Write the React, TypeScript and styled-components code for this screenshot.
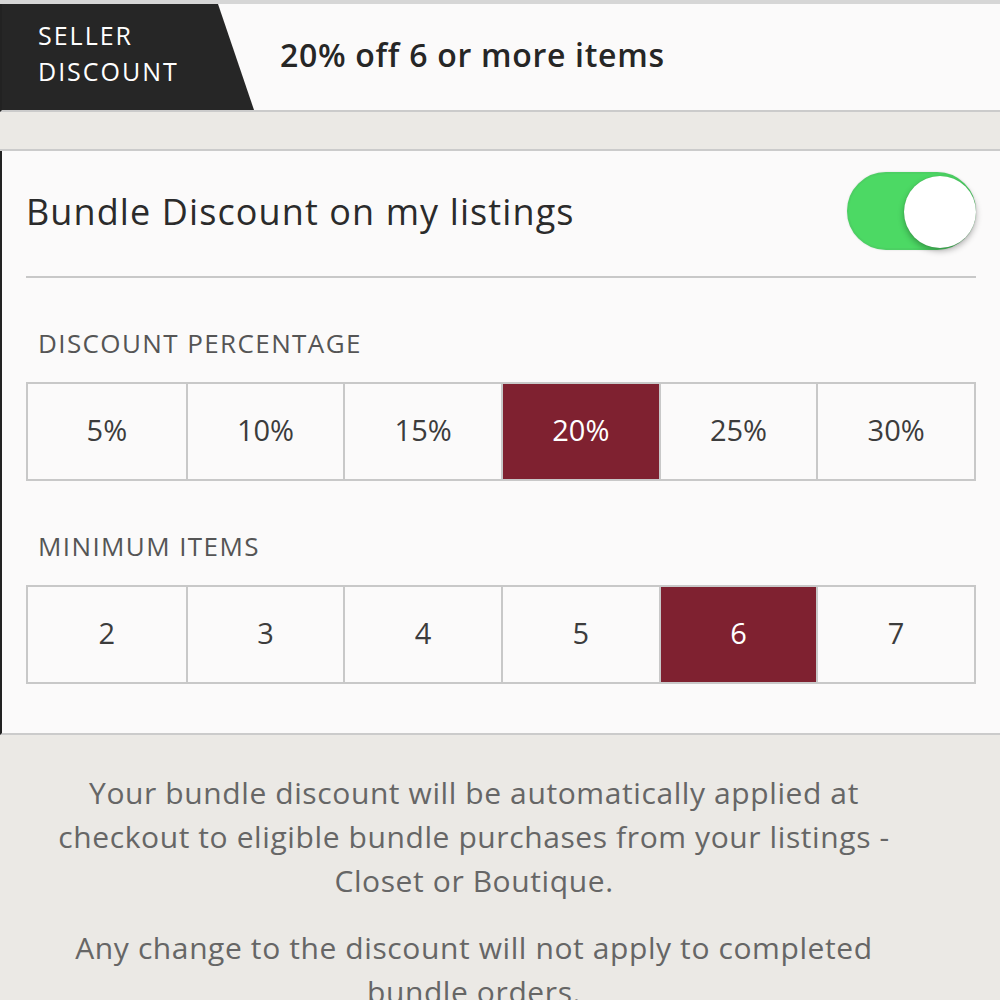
import React, { useState } from 'react'
import styled, { createGlobalStyle } from 'styled-components'

const GlobalStyle = createGlobalStyle`
    html, body {
        margin: 0;
        padding: 0;
        background: #ebe9e5;
        font-family: "Open Sans", Lato, sans-serif;
    }
`

const PERCENTAGES = [5, 10, 15, 20, 25, 30]
const MIN_ITEMS = [2, 3, 4, 5, 6, 7]

const Page = styled.div`
    width: 1000px;
    height: 1000px;
    overflow: hidden;
    background: #ebe9e5;
    border-top: 4px solid #d6d6d6;
    box-sizing: border-box;
`

const Header = styled.div`
    display: flex;
    align-items: center;
    height: 106px;
    background: #fbfafa;
    border-bottom: 2px solid #cbcbcb;
    border-left: 2px solid #222;
`

const Tab = styled.div`
    align-self: stretch;
    width: 252px;
    background: #262626;
    clip-path: polygon(0 0, 216px 0, 252px 100%, 0 100%);
    color: #fff;
    font-size: 25px;
    letter-spacing: 2px;
    line-height: 36px;
    padding: 13px 0 0 36px;
    box-sizing: border-box;
`

const HeaderText = styled.div`
    margin-left: 26px;
    font-size: 32px;
    font-weight: 600;
    letter-spacing: 0.7px;
    color: #262626;
    padding-bottom: 6px;
`

const Band = styled.div`
    height: 37px;
    border-bottom: 2px solid #cbcbcb;
`

const Card = styled.div`
    background: #fbfafa;
    border-left: 2px solid #222;
    border-bottom: 2px solid #cbcbcb;
    padding: 0 24px 0 24px;
    height: 584px;
    box-sizing: border-box;
`

const ToggleRow = styled.div`
    display: flex;
    align-items: center;
    justify-content: space-between;
    height: 125px;
    border-bottom: 2px solid #c8c8c8;
`

const ToggleLabel = styled.div`
    font-size: 36px;
    letter-spacing: 1.1px;
    color: #2b2b2b;
    padding-bottom: 4px;
`

const Switch = styled.button<{ $on: boolean }>`
    position: relative;
    width: 129px;
    height: 78px;
    border-radius: 39px;
    border: 2px solid ${p => (p.$on ? '#4cd063' : '#dcdcdc')};
    background: ${p => (p.$on ? '#4cd964' : '#fff')};
    box-shadow: 0 0 2px rgba(0, 0, 0, 0.15);
    padding: 0;
    margin-top: -6px;
    cursor: pointer;
`

const Knob = styled.span<{ $on: boolean }>`
    position: absolute;
    top: 2px;
    left: ${p => (p.$on ? '55px' : '2px')};
    width: 72px;
    height: 72px;
    border-radius: 50%;
    background: #fff;
    box-shadow: 0 3px 6px rgba(0, 0, 0, 0.3), 0 0 1px rgba(0, 0, 0, 0.2);
`

const SectionTitle = styled.div`
    font-size: 26px;
    letter-spacing: 1.4px;
    color: #555;
    padding: 52px 0 0 12px;
    line-height: 26px;
`

const Options = styled.div`
    display: grid;
    grid-template-columns: repeat(6, 1fr);
    margin-top: 26px;
    border: 2px solid #c8c8c8;
    height: 99px;
    box-sizing: border-box;
`

const Option = styled.button<{ $selected: boolean }>`
    border: none;
    border-left: 2px solid #c8c8c8;
    background: ${p => (p.$selected ? '#7f2130' : 'transparent')};
    color: ${p => (p.$selected ? '#fff' : '#3c3c3c')};
    font-family: inherit;
    font-size: 29px;
    padding: 0 0 4px;
    cursor: pointer;

    &:first-child {
        border-left: none;
    }
`

const Notes = styled.div`
    width: 880px;
    padding: 36px 0 0 34px;
    text-align: center;
    color: #666;
    font-size: 30px;
    letter-spacing: 0.6px;
    line-height: 44px;
`

const Note = styled.p`
    margin: 0 0 23px;
`

export default function App() {
    const [on, setOn] = useState(true)
    const [pct, setPct] = useState(20)
    const [min, setMin] = useState(6)

    return <Page>
        <GlobalStyle />
        <Header>
            <Tab>SELLER<br />DISCOUNT</Tab>
            <HeaderText>{pct}% off {min} or more items</HeaderText>
        </Header>
        <Band />
        <Card>
            <ToggleRow>
                <ToggleLabel>Bundle Discount on my listings</ToggleLabel>
                <Switch $on={on} onClick={() => setOn(!on)}>
                    <Knob $on={on} />
                </Switch>
            </ToggleRow>
            <SectionTitle>DISCOUNT PERCENTAGE</SectionTitle>
            <Options>
                {PERCENTAGES.map(value =>
                    <Option key={value} $selected={value === pct} onClick={() => setPct(value)}>{value}%</Option>
                )}
            </Options>
            <SectionTitle>MINIMUM ITEMS</SectionTitle>
            <Options>
                {MIN_ITEMS.map(value =>
                    <Option key={value} $selected={value === min} onClick={() => setMin(value)}>{value}</Option>
                )}
            </Options>
        </Card>
        <Notes>
            <Note>Your bundle discount will be automatically applied at checkout to eligible bundle purchases from your listings - Closet or Boutique.</Note>
            <Note>Any change to the discount will not apply to completed bundle orders.</Note>
        </Notes>
    </Page>
}
